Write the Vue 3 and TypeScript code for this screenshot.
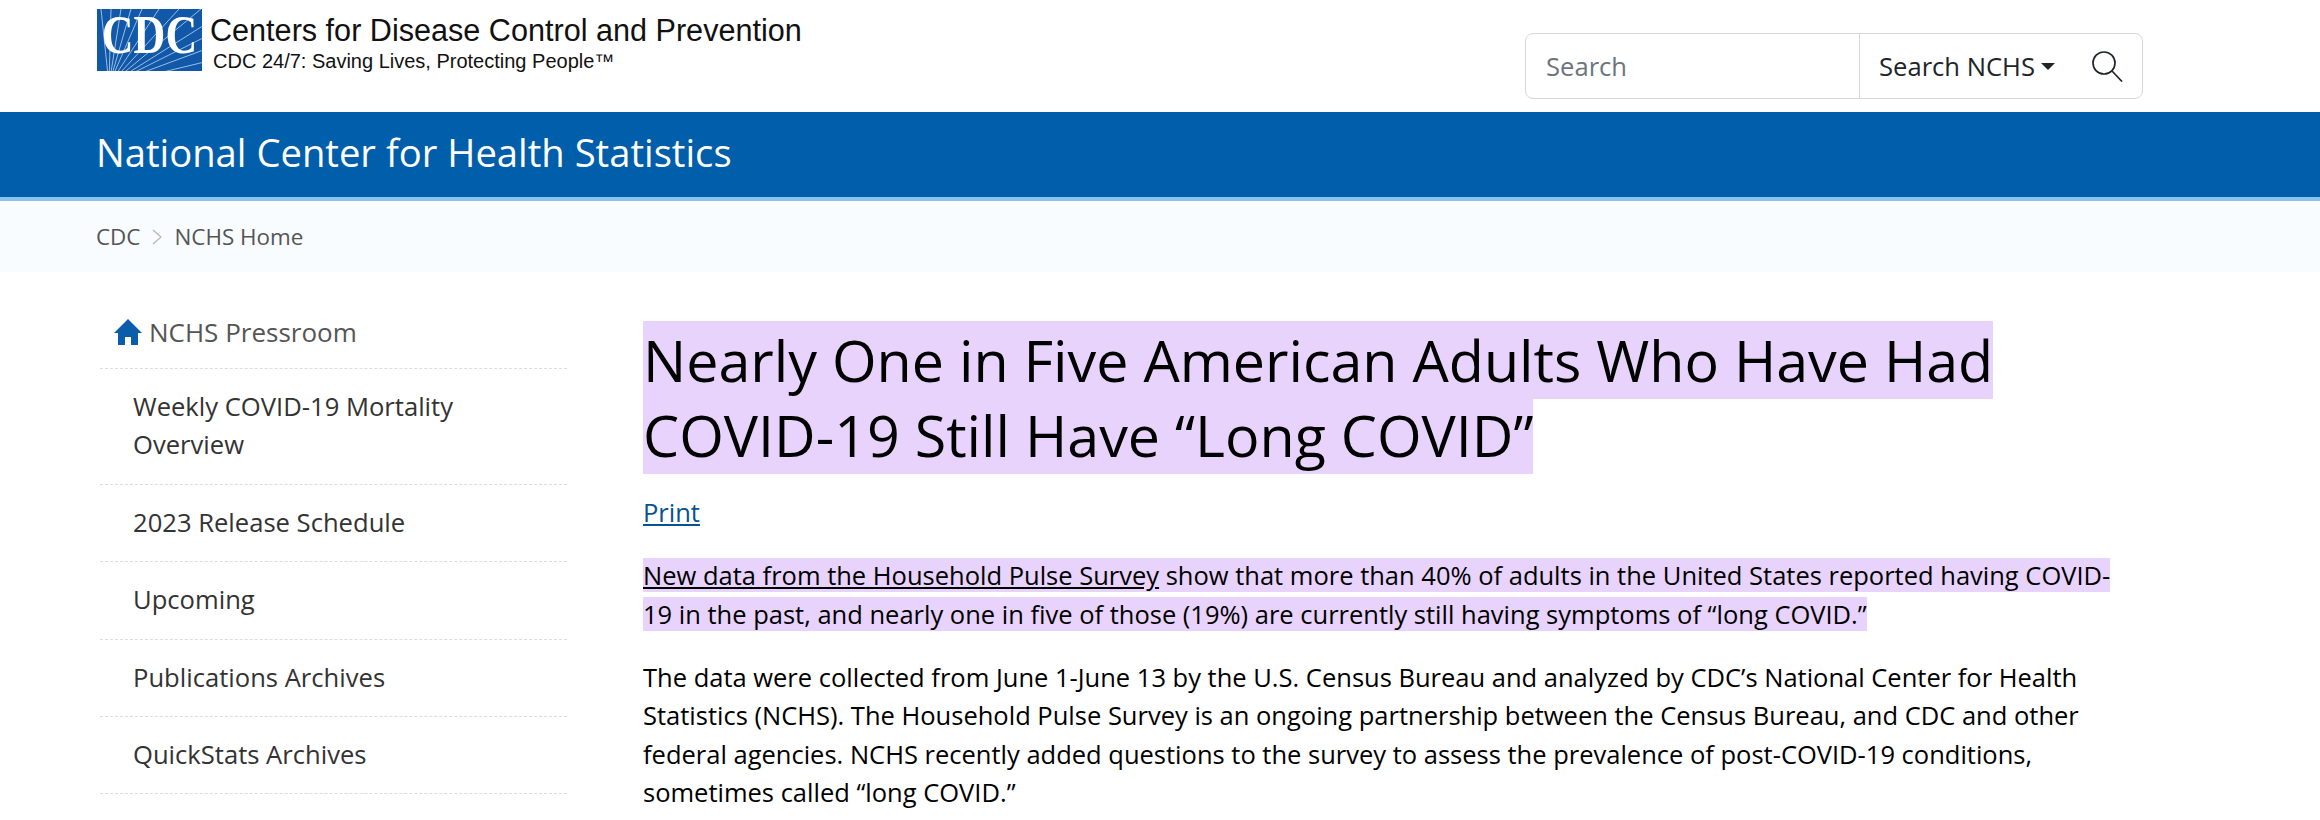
<script setup lang="ts">
const navItems: string[] = [
  'Weekly COVID-19 Mortality Overview',
  '2023 Release Schedule',
  'Upcoming',
  'Publications Archives',
  'QuickStats Archives',
]
const rays: string[] = [
  'M12 76L4 0','M12 76L14 0','M12 76L24 0','M12 76L34 0','M12 76L45 0','M12 76L62 0',
  'M12 76L82 0','M12 76L104 0','M12 76L120 8','M12 76L120 22','M12 76L120 36','M12 76L120 50',
]
</script>

<template>
  <div class="page">
    <header class="top">
      <div class="brand">
        <svg class="logo" viewBox="0 0 105 62" role="img" aria-label="CDC">
          <rect width="105" height="62" fill="#1258a8" />
          <path v-for="r in rays" :key="r" :d="r" stroke="#a9c8e8" stroke-width="0.9" fill="none" />
          <text transform="translate(52.5 44) scale(1 1.24)" text-anchor="middle" class="logo-text">CDC</text>
        </svg>
        <div class="brand-text">
          <div class="brand-name">Centers for Disease Control and Prevention</div>
          <div class="brand-tag">CDC 24/7: Saving Lives, Protecting People™</div>
        </div>
      </div>
      <div class="search">
        <div class="search-input">Search</div>
        <div class="search-scope">
          <span>Search NCHS</span>
          <i class="caret"></i>
        </div>
        <div class="search-btn">
          <svg viewBox="0 0 32 32" width="32" height="32" fill="none" stroke="#212529" stroke-width="1.7">
            <circle cx="13" cy="13" r="11" />
            <path d="M21 21l10 10.5" />
          </svg>
        </div>
      </div>
    </header>

    <div class="band">National Center for Health Statistics</div>

    <nav class="crumbs">
      <span>CDC</span>
      <svg viewBox="0 0 10 16" width="10" height="16" fill="none" stroke="#b5b5b5" stroke-width="1.2"><path d="M1 1l8 7-8 7" /></svg>
      <span>NCHS Home</span>
    </nav>

    <div class="body">
      <aside class="side">
        <div class="side-head">
          <svg viewBox="0 0 28 28" width="28" height="28" fill="#0b5cab"><path d="M14 1L0 15h4v12h7v-8h6v8h7V15h4z" /></svg>
          <span>NCHS Pressroom</span>
        </div>
        <div v-for="item in navItems" :key="item" class="side-item">{{ item }}</div>
      </aside>

      <main class="main">
        <h1 class="title"><mark>Nearly One in Five American Adults Who Have Had COVID-19 Still Have “Long COVID”</mark></h1>
        <p class="print"><a href="#">Print</a></p>
        <p class="para"><mark><a class="dark" href="#">New data from the Household Pulse Survey</a> show that more than 40% of adults in the United States reported having COVID-19 in the past, and nearly one in five of those (19%) are currently still having symptoms of “long COVID.”</mark></p>
        <p class="para">The data were collected from June 1-June 13 by the U.S. Census Bureau and analyzed by CDC’s National Center for Health Statistics (NCHS). The Household Pulse Survey is an ongoing partnership between the Census Bureau, and CDC and other federal agencies. NCHS recently added questions to the survey to assess the prevalence of post-COVID-19 conditions, sometimes called “long COVID.”</p>
      </main>
    </div>
  </div>
</template>

<style>
html, body { margin: 0; overflow: hidden; background: #fff; }
</style>

<style scoped>
.page { width: 2320px; height: 820px; overflow: hidden; font-family: "Open Sans", sans-serif; color: #000; }
.top { height: 112px; box-sizing: border-box; padding: 9px 177px 0 97px; display: flex; justify-content: space-between; }
.brand { display: flex; gap: 8px; height: 62px; }
.logo { width: 105px; height: 62px; display: block; }
.logo-text { font-family: "Liberation Serif", serif; font-weight: 700; font-size: 44px; fill: #fff; }
.brand-text { font-family: "Liberation Sans", sans-serif; color: #111; }
.brand-name { font-size: 30.6px; line-height: 30px; margin-top: 6px; white-space: nowrap; }
.brand-tag { font-size: 20px; line-height: 20px; margin: 6px 0 0 3px; white-space: nowrap; }
.search { margin-top: 24px; width: 618px; height: 66px; box-sizing: border-box; border: 1.5px solid #d5d8db; border-radius: 8px; display: flex; align-items: center; font-size: 25.6px; }
.search-input { width: 334px; height: 100%; box-sizing: border-box; padding-left: 20px; display: flex; align-items: center; color: #6c757d; border-right: 1.5px solid #d5d8db; }
.search-scope { display: flex; align-items: center; gap: 6px; padding-left: 19px; color: #212529; }
.caret { width: 0; height: 0; border-left: 7px solid transparent; border-right: 7px solid transparent; border-top: 7px solid #212529; }
.search-btn { margin-left: 36px; display: flex; }
.band { height: 85px; box-sizing: border-box; padding-left: 96px; background: #005eaa; color: #fff; font-size: 38.2px; line-height: 81px; }
.crumbs { border-top: 4px solid #88c3ea; height: 71px; background: #f9fcff; padding-left: 96px; display: flex; align-items: center; gap: 12px; font-size: 22.4px; color: #555; }
.body { display: flex; padding: 0 0 0 100px; }
.side { width: 467px; flex: none; padding-top: 41px; font-size: 25.6px; line-height: 38.4px; color: #333; }
.side-head { display: flex; align-items: center; gap: 7px; padding: 0 0 17px 14px; border-bottom: 1.5px dashed #ddd; color: #555; height: 38px; font-size: 26px; }
.side-item { padding: 19px 60px 19px 33px; border-bottom: 1.5px dashed #ddd; }
.main { margin-left: 76px; width: 1480px; padding-top: 51px; }
mark { background: #e8d3fc; color: inherit; }
.title { margin: 0; font-size: 57.4px; line-height: 74.9px; font-weight: 400; }
.print { margin: 20px 0 0; font-size: 25.5px; line-height: 38.4px; }
.print a { color: #075290; }
.para { margin: 25px 0 0; font-size: 25.5px; line-height: 38.4px; }
.dark { color: #000; }
</style>
